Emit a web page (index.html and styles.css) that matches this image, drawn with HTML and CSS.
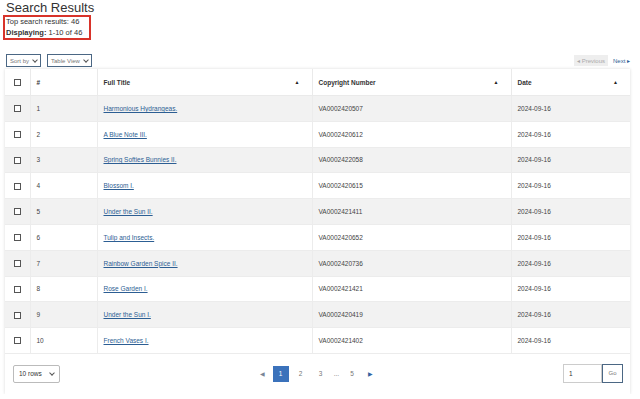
FILE: index.html
```html
<!DOCTYPE html>
<html lang="en">
<head>
  <meta charset="UTF-8">
  <meta name="viewport" content="width=device-width, initial-scale=1.0">
  <title>Search Results</title>
  <link rel="stylesheet" href="styles.css">
</head>
<body>
  <h1 class="titulo">Search Results</h1>
  <div class="resumen">
    <div>Top search results: 46</div>
    <div><b>Displaying:</b> 1-10 of 46</div>
  </div>

  <div class="barra">
    <div class="filtros">
      <span class="selector">Sort by <span class="chev"></span></span>
      <span class="selector">Table View <span class="chev"></span></span>
    </div>
    <div class="navegacion">
      <span class="prev">&#9666; Previous</span>
      <span class="next">Next &#9656;</span>
    </div>
  </div>

  <div class="caja">
    <table class="tabla">
      <colgroup>
        <col style="width:25px">
        <col style="width:67px">
        <col style="width:215px">
        <col style="width:199px">
        <col style="width:119px">
      </colgroup>
      <thead>
        <tr>
          <th><span class="check"></span></th>
          <th>#</th>
          <th><div class="orden">Full Title <span>&#9650;</span></div></th>
          <th><div class="orden">Copyright Number <span>&#9650;</span></div></th>
          <th><div class="orden">Date <span>&#9650;</span></div></th>
        </tr>
      </thead>
      <tbody>
        <tr><td><span class="check"></span></td><td>1</td><td><a href="#">Harmonious Hydrangeas.</a></td><td>VA0002420507</td><td>2024-09-16</td></tr>
        <tr><td><span class="check"></span></td><td>2</td><td><a href="#">A Blue Note III.</a></td><td>VA0002420612</td><td>2024-09-16</td></tr>
        <tr><td><span class="check"></span></td><td>3</td><td><a href="#">Spring Softies Bunnies II.</a></td><td>VA0002422058</td><td>2024-09-16</td></tr>
        <tr><td><span class="check"></span></td><td>4</td><td><a href="#">Blossom I.</a></td><td>VA0002420615</td><td>2024-09-16</td></tr>
        <tr><td><span class="check"></span></td><td>5</td><td><a href="#">Under the Sun II.</a></td><td>VA0002421411</td><td>2024-09-16</td></tr>
        <tr><td><span class="check"></span></td><td>6</td><td><a href="#">Tulip and Insects.</a></td><td>VA0002420652</td><td>2024-09-16</td></tr>
        <tr><td><span class="check"></span></td><td>7</td><td><a href="#">Rainbow Garden Spice II.</a></td><td>VA0002420736</td><td>2024-09-16</td></tr>
        <tr><td><span class="check"></span></td><td>8</td><td><a href="#">Rose Garden I.</a></td><td>VA0002421421</td><td>2024-09-16</td></tr>
        <tr><td><span class="check"></span></td><td>9</td><td><a href="#">Under the Sun I.</a></td><td>VA0002420419</td><td>2024-09-16</td></tr>
        <tr><td><span class="check"></span></td><td>10</td><td><a href="#">French Vases I.</a></td><td>VA0002421402</td><td>2024-09-16</td></tr>
      </tbody>
    </table>

    <div class="pie">
      <span class="filas">10 rows <span class="chev"></span></span>
      <div class="paginas">
        <span class="flecha">&#9664;</span>
        <span class="pagina activa">1</span>
        <span class="pagina">2</span>
        <span class="pagina">3</span>
        <span class="puntos">...</span>
        <span class="pagina">5</span>
        <span class="flecha">&#9654;</span>
      </div>
      <div class="ir">
        <span class="campo">1</span>
        <span class="boton">Go</span>
      </div>
    </div>
  </div>
</body>
</html>
```

FILE: styles.css
```css
body {
  font-family: "Liberation Sans", Arial, sans-serif;
  background-color: #fff;
  color: #333;
  margin: 0;
  padding: 0 0 0 5px;
}
.titulo {
  font-size: 13px;
  font-weight: normal;
  line-height: 15px;
  margin: 0 0 0 1px;
  color: #333;
}
.resumen {
  display: inline-block;
  margin: 0 0 0 -2px;
  border: 2px solid #d8332a;
  padding: 0 7px 0 1px;
  font-size: 7.5px;
  line-height: 10.5px;
  color: #333;
}
.barra {
  display: flex;
  justify-content: space-between;
  align-items: center;
  margin-top: 14px;
  width: 625px;
}
.filtros {
  display: flex;
  gap: 6px;
  margin-left: 1px;
}
.selector {
  display: inline-flex;
  align-items: center;
  gap: 4px;
  border: 1px solid #4b6784;
  padding: 0 3px;
  height: 11px;
  font-size: 6px;
  color: #777;
}
.chev {
  display: inline-block;
  width: 3px;
  height: 3px;
  border-right: 1px solid #555;
  border-bottom: 1px solid #555;
  transform: translateY(-1px) rotate(45deg);
}
.navegacion {
  display: flex;
  gap: 5px;
  font-size: 6px;
}
.prev {
  background-color: #eee;
  color: #aaa;
  padding: 2px 3px;
}
.next {
  color: #2c5e93;
  padding: 2px 0;
}
.caja {
  width: 625px;
  margin-top: 2px;
  box-shadow: 0 0 3px rgba(0, 0, 0, 0.15);
}
.tabla {
  width: 625px;
  border-collapse: collapse;
  table-layout: fixed;
  font-size: 6.5px;
}
.tabla th {
  height: 26px;
  text-align: left;
  font-weight: bold;
  color: #333;
  background-color: #fff;
  border: 1px solid #eaeaea;
  border-top: none;
  padding: 0 6px;
}
.tabla th:first-child,
.tabla td:first-child {
  text-align: center;
  padding: 0;
  border-left: none;
}
.tabla th:last-child,
.tabla td:last-child {
  border-right: none;
}
.orden {
  display: flex;
  justify-content: space-between;
  align-items: center;
}
.orden span {
  font-size: 5px;
  color: #222;
  margin-right: 6px;
}
.tabla td {
  height: 24.8px;
  padding: 0 6px;
  border-left: 1px solid #ececec;
  border-right: 1px solid #ececec;
  border-bottom: 1px solid #ececec;
  color: #444;
}
.tabla tbody tr:nth-child(odd) td {
  background-color: #f2f2f2;
}
.tabla a {
  color: #2c5e93;
}
.check {
  display: inline-block;
  width: 5px;
  height: 5px;
  border: 1px solid #555;
  background-color: #fff;
  vertical-align: middle;
}
.pie {
  display: flex;
  justify-content: space-between;
  align-items: center;
  height: 40px;
  padding: 0 7px 0 8px;
}
.filas {
  display: inline-flex;
  align-items: center;
  gap: 8px;
  height: 16px;
  padding: 0 5px;
  border: 1px solid #bbb;
  border-radius: 2px;
  font-size: 6.5px;
  color: #333;
}
.paginas {
  display: flex;
  align-items: center;
  gap: 4px;
  margin-left: 10px;
  font-size: 6.5px;
  color: #777;
}
.flecha {
  font-size: 6px;
  color: #3464a0;
  margin: 0 4px;
}
.flecha:first-child {
  color: #7a8596;
}
.pagina {
  display: inline-flex;
  align-items: center;
  justify-content: center;
  min-width: 16px;
  height: 16px;
}
.puntos {
  margin: 0 1px;
}
.pagina.activa {
  background-color: #3b72bb;
  color: #fff;
}
.ir {
  display: flex;
}
.campo {
  width: 32px;
  height: 17px;
  border: 1px solid #ccc;
  padding-left: 5px;
  font-size: 6.5px;
  line-height: 17px;
  color: #333;
}
.boton {
  width: 19px;
  height: 17px;
  border: 1px solid #4b6784;
  font-size: 6px;
  line-height: 17px;
  text-align: center;
  color: #777;
}
```
